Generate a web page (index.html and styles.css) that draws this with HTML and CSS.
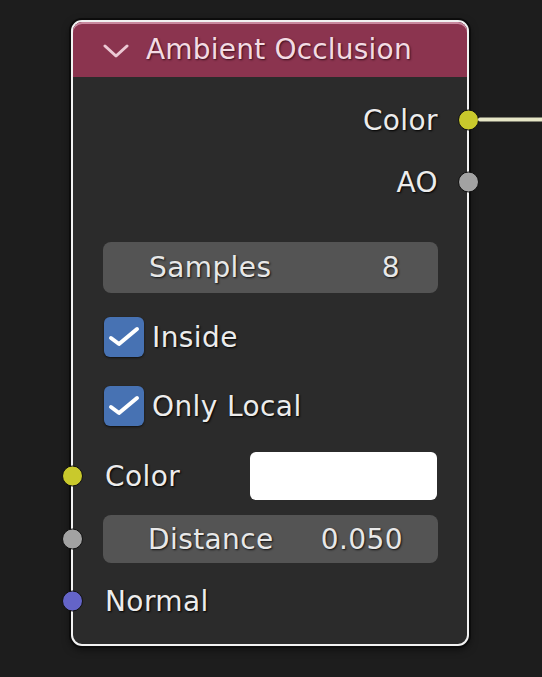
FILE: index.html
```html
<!DOCTYPE html>
<html>
<head>
<meta charset="utf-8">
<link rel="stylesheet" href="styles.css">
</head>
<body>
<div class="node">
  <div class="header">
    <svg class="chevron" width="26" height="14" viewBox="0 0 26 14"><path d="M2 2 L13 12 L24 2" fill="none" stroke="#ecc9d4" stroke-width="3" stroke-linecap="round" stroke-linejoin="round"/></svg>
    <span class="title">Ambient Occlusion</span>
  </div>
  <div class="body">
    <div class="row out r1"><span class="label">Color</span><span class="socket s-out yellow link"></span></div>
    <div class="row out r2"><span class="label">AO</span><span class="socket s-out grey"></span></div>
    <div class="field samples"><span>Samples</span><span>8</span></div>
    <div class="check c1"><span class="box"><svg width="40" height="40" viewBox="0 0 40 40"><path d="M7 21 L15 27 L33 12" fill="none" stroke="#fff" stroke-width="4" stroke-linecap="round" stroke-linejoin="round"/></svg></span><span class="label">Inside</span></div>
    <div class="check c2"><span class="box"><svg width="40" height="40" viewBox="0 0 40 40"><path d="M7 21 L15 27 L33 12" fill="none" stroke="#fff" stroke-width="4" stroke-linecap="round" stroke-linejoin="round"/></svg></span><span class="label">Only Local</span></div>
    <div class="row in colorin"><span class="socket s-in yellow"></span><span class="label">Color</span><span class="swatch"></span></div>
    <div class="field distance"><span class="socket s-in-field grey"></span><span>Distance</span><span>0.050</span></div>
    <div class="row in normal"><span class="socket s-in purple"></span><span class="label">Normal</span></div>
  </div>
</div>
</body>
</html>
```
FILE: styles.css
```css
html, body {
  margin: 0;
  padding: 0;
  background: #1d1d1d;
  width: 542px;
  height: 677px;
  overflow: hidden;
  font-family: "DejaVu Sans", sans-serif;
}
body {
  padding-top: 20px;
  box-sizing: border-box;
}
.node {
  position: relative;
  margin-left: 71px;
  width: 398px;
  height: 626px;
  box-sizing: border-box;
  border: 2px solid #f2f2f2;
  border-radius: 11px;
  background: #2b2b2b;
  box-shadow: 0 0 0 2px #0c0c0c, 0 3px 8px rgba(0,0,0,0.6);
  display: flex;
  flex-direction: column;
}
.header {
  height: 55px;
  background: #8b344f;
  border-radius: 9px 9px 0 0;
  box-shadow: inset 0 2px 0 #c98aa0;
  display: flex;
  align-items: center;
  padding-left: 30px;
  box-sizing: border-box;
}
.chevron {
  margin-top: 2px;
}
.title {
  margin-left: 17px;
  font-size: 28px;
  color: #f3dbe3;
  text-shadow: 1px 1px 2px #3a0f1c;
  letter-spacing: 0.2px;
}
.body {
  display: flex;
  flex-direction: column;
  padding: 0 29px 0 30px;
}
.label {
  font-size: 28px;
  letter-spacing: 0.4px;
  color: #ececec;
  text-shadow: 1px 1px 2px #000;
}
.row {
  position: relative;
  height: 40px;
  display: flex;
  align-items: center;
}
.row.out {
  justify-content: flex-end;
}
.r1 { margin-top: 23px; }
.r2 { margin-top: 22px; }
.socket {
  position: absolute;
  width: 19px;
  height: 19px;
  border-radius: 50%;
  border: 1px solid #111;
  top: 50%;
  transform: translateY(-50%);
  z-index: 2;
}
.s-out { right: -41px; }
.s-in { left: -41px; }
.yellow { background: #c9c92c; }
.grey { background: #a2a2a2; }
.purple { background: #6464c8; }
.link::after {
  content: "";
  position: absolute;
  left: 19px;
  top: 7px;
  width: 80px;
  height: 4px;
  background: #e6e6c6;
  border-radius: 2px;
  z-index: -1;
}
.field {
  position: relative;
  height: 51px;
  background: #545454;
  border-radius: 8px;
  display: flex;
  align-items: center;
  justify-content: space-between;
  padding: 0 38px 0 46px;
  font-size: 28px;
  letter-spacing: 0.4px;
  color: #e8e8e8;
  text-shadow: 1px 1px 2px #111;
}
.samples { margin-top: 40px; }
.distance {
  margin-top: 15px;
  height: 48px;
  padding: 0 35px 0 45px;
}
.s-in-field { left: -41px; }
.check {
  display: flex;
  align-items: center;
  height: 40px;
}
.c1 { margin-top: 24px; }
.c2 { margin-top: 29px; }
.box {
  width: 40px;
  height: 40px;
  border-radius: 6px;
  background: #4772b3;
  box-shadow: 0 1px 2px #111;
  margin-left: 1px;
  display: flex;
}
.check .label {
  margin-left: 8px;
}
.colorin {
  height: 48px;
  margin-top: 26px;
}
.colorin .label {
  margin-left: 2px;
}
.swatch {
  margin-left: auto;
  width: 187px;
  height: 48px;
  background: #ffffff;
  border-radius: 6px;
  margin-right: 1px;
}
.normal {
  margin-top: 18px;
}
.normal .label {
  margin-left: 2px;
}
```
